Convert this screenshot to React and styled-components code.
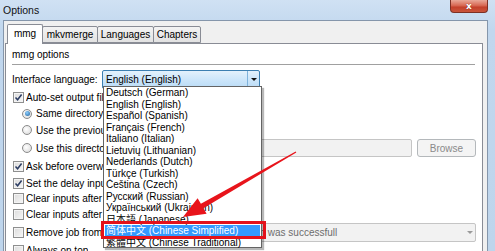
import React from "react";
import styled, { createGlobalStyle } from "styled-components";

const GlobalStyle = createGlobalStyle`
  html, body { margin: 0; padding: 0; background: #c6daef; }
  body { font-family: "Liberation Sans", Arial, sans-serif; }
  #root { width: 495px; height: 251px; }
`;

const Window = styled.div`
  position: relative;
  width: 495px;
  height: 251px;
  overflow: hidden;
  display: flex;
  flex-direction: column;
  background: linear-gradient(180deg, #d0e1f3 0px, #c1d7ee 30px, #bed5ec 251px);
`;

const TitleBar = styled.div`
  height: 20px;
  flex: none;
  display: flex;
  align-items: flex-start;
  padding-left: 3px;
`;

const Title = styled.span`
  font-size: 10.5px;
  line-height: 20px;
  color: #111;
`;

const CloseButton = styled.div`
  margin-left: auto;
  margin-right: 7px;
  width: 38px;
  height: 13px;
  box-sizing: border-box;
  border: 1px solid #7d3024;
  border-top: none;
  border-radius: 0 0 4px 4px;
  background: linear-gradient(180deg, #e9a898 0%, #d86a55 45%, #c4412b 60%, #c9553c 100%);
  display: flex;
  align-items: center;
  justify-content: center;
  color: #fff;
  font-family: "DejaVu Sans", sans-serif;
  font-weight: bold;
  font-size: 9px;
  line-height: 1;
  text-shadow: 0 0 1px #6a1a10;
`;

const Client = styled.div`
  flex: 1;
  min-height: 0;
  margin: 0 7px 0 3px;
  background: #f0f0f0;
  border: 1px solid #8596ab;
  border-bottom: none;
  padding: 3px 4px 0 1px;
  display: flex;
  flex-direction: column;
`;

const TabStrip = styled.div`
  height: 19px;
  flex: none;
  display: flex;
  align-items: flex-end;
  padding-left: 2px;
  position: relative;
  z-index: 1;
`;

const Tab = styled.div`
  box-sizing: border-box;
  width: ${(p) => p.$w}px;
  height: ${(p) => (p.$active ? 20 : 17)}px;
  margin-bottom: ${(p) => (p.$active ? -1 : 0)}px;
  margin-left: ${(p) => (p.$active ? 0 : -1)}px;
  border: 1px solid #898c95;
  border-bottom: ${(p) => (p.$active ? "none" : "1px solid #898c95")};
  border-radius: 2px 2px 0 0;
  background: ${(p) => (p.$active ? "#ffffff" : "linear-gradient(180deg, #f3f3f3, #e2e2e2)")};
  font-size: 10px;
  color: #000;
  display: flex;
  align-items: center;
  justify-content: center;
  padding-bottom: ${(p) => (p.$active ? 2 : 0)}px;
  &:first-child { margin-left: 0; }
`;

const Page = styled.div`
  flex: 1;
  background: #ffffff;
  border: 1px solid #898c95;
  border-bottom: none;
  padding: 0 6px;
  display: flex;
  flex-direction: column;
`;

const Header = styled.div`
  height: 20px;
  flex: none;
  display: flex;
  align-items: center;
  font-size: 10px;
  color: #000;
`;

const Separator = styled.div`
  height: 1px;
  flex: none;
  background: #a0a0a0;
  margin-right: 1px;
`;

const Row = styled.div`
  height: ${(p) => p.$h}px;
  margin-top: ${(p) => p.$mt || 0}px;
  flex: none;
  display: flex;
  align-items: center;
  padding-left: ${(p) => p.$indent || 0}px;
  font-size: 10px;
  color: #000;
  white-space: nowrap;
`;

const Label = styled.span`
  width: ${(p) => (p.$w ? `${p.$w}px` : "auto")};
  flex: ${(p) => (p.$grow ? 1 : "none")};
  margin-left: ${(p) => p.$gap || 0}px;
  overflow: hidden;
`;

const Box = styled.span`
  box-sizing: border-box;
  width: 11px;
  height: 11px;
  flex: none;
  border: 1px solid #8e8f8f;
  background: linear-gradient(135deg, #dcdcdc, #f6f6f6);
  box-shadow: inset 0 0 0 1px #f4f4f4;
  display: flex;
  align-items: center;
  justify-content: center;
`;

const RadioCircle = styled.span`
  box-sizing: border-box;
  width: 10px;
  height: 10px;
  flex: none;
  border-radius: 50%;
  border: 1px solid #8b8b8b;
  background: radial-gradient(circle at 40% 40%, #ffffff, #d6d6d6);
  display: flex;
  align-items: center;
  justify-content: center;
`;

const RadioDot = styled.span`
  width: 5px;
  height: 5px;
  border-radius: 50%;
  background: radial-gradient(circle at 40% 35%, #8ed0ff, #1d5f9b);
`;

const TextField = styled.div`
  box-sizing: border-box;
  width: 250px;
  height: 18px;
  flex: none;
  border: 1px solid #c5c5c5;
  border-radius: 2px;
  background: #f2f2f2;
`;

const Button = styled.div`
  box-sizing: border-box;
  width: 59px;
  height: 18px;
  margin-left: 5px;
  flex: none;
  border: 1px solid #b4b8bb;
  border-radius: 3px;
  background: #f4f4f4;
  color: #8a8a8a;
  font-size: 10px;
  display: flex;
  align-items: center;
  justify-content: center;
`;

const Combo = styled.div`
  box-sizing: border-box;
  width: ${(p) => p.$w}px;
  height: 19px;
  flex: none;
  display: flex;
  align-items: center;
  border: 1px solid ${(p) => (p.$focus ? "#3c7fb1" : "#c5c5c5")};
  border-radius: 2px;
  background: ${(p) =>
    p.$focus ? "linear-gradient(180deg, #e3f1fc 0%, #cde6fa 50%, #b9dbf6 100%)" : "#f2f2f2"};
  color: ${(p) => (p.$focus ? "#000" : "#6d6d6d")};
  padding-left: 3px;
  font-size: 10px;
  overflow: hidden;
  white-space: nowrap;
`;

const ComboText = styled.span`
  flex: 1;
  overflow: hidden;
`;

const ComboArrow = styled.span`
  width: 11px;
  height: 100%;
  flex: none;
  display: flex;
  align-items: center;
  justify-content: center;
  border-left: ${(p) => (p.$focus ? "1px solid #7fb3dc" : "none")};
  &::after {
    content: "";
    border-left: 3px solid transparent;
    border-right: 3px solid transparent;
    border-top: 3px solid ${(p) => (p.$focus ? "#111" : "#9a9a9a")};
  }
`;

const RightCombo = styled(Combo)`
  margin-left: auto;
`;

const DropList = styled.div`
  position: absolute;
  left: 103px;
  top: 86px;
  width: 159px;
  box-sizing: border-box;
  height: 162px;
  background: #ffffff;
  border: 1px solid #646464;
  box-shadow: 2px 2px 1px rgba(0, 0, 0, 0.28);
  z-index: 5;
  font-family: "Liberation Sans", "Noto Sans CJK SC", Arial, sans-serif;
`;

const Item = styled.div`
  height: 11.5px;
  line-height: 11.5px;
  padding-left: 1px;
  margin: 0 1px;
  font-size: 10px;
  white-space: nowrap;
  overflow: hidden;
  color: ${(p) => (p.$sel ? "#ffffff" : "#000")};
  background: ${(p) => (p.$sel ? "#3399ff" : "transparent")};
`;

const RedBox = styled.div`
  position: absolute;
  left: 101px;
  top: 221px;
  width: 165px;
  height: 18px;
  box-sizing: border-box;
  border: 3px solid #e3121b;
  z-index: 6;
`;

const Overlay = styled.svg`
  position: absolute;
  left: 0;
  top: 0;
  width: 495px;
  height: 251px;
  z-index: 7;
  pointer-events: none;
`;

function Check({ on }) {
  return (
    <Box>
      {on && (
        <svg width="9" height="9" viewBox="0 0 9 9">
          <path d="M1.5 4.5 L3.6 6.8 L7.6 1.5" fill="none" stroke="#2b3c63" strokeWidth="1.5" />
        </svg>
      )}
    </Box>
  );
}

function Radio({ on }) {
  return <RadioCircle>{on && <RadioDot />}</RadioCircle>;
}

const languages = [
  "Deutsch (German)",
  "English (English)",
  "Español (Spanish)",
  "Français (French)",
  "Italiano (Italian)",
  "Lietuvių (Lithuanian)",
  "Nederlands (Dutch)",
  "Türkçe (Turkish)",
  "Čeština (Czech)",
  "Русский (Russian)",
  "Український (Ukrainian)",
  "日本語 (Japanese)",
  "简体中文 (Chinese Simplified)",
  "繁體中文 (Chinese Traditional)",
];

export default function App() {
  return (
    <>
      <GlobalStyle />
      <Window>
        <TitleBar>
          <Title>Options</Title>
          <CloseButton>x</CloseButton>
        </TitleBar>
        <Client>
          <TabStrip>
            <Tab $active $w={36}>mmg</Tab>
            <Tab $w={56}>mkvmerge</Tab>
            <Tab $w={57}>Languages</Tab>
            <Tab $w={48}>Chapters</Tab>
          </TabStrip>
          <Page>
            <Header>mmg options</Header>
            <Separator />
            <Row $h={19} $mt={5}>
              <Label $w={90}>Interface language:</Label>
              <Combo $focus $w={158}>
                <ComboText>English (English)</ComboText>
                <ComboArrow $focus />
              </Combo>
            </Row>
            <Row $h={16} $indent={1}>
              <Check on />
              <Label $gap={2}>Auto-set output filename</Label>
            </Row>
            <Row $h={17} $indent={10}>
              <Radio on />
              <Label $gap={4}>Same directory as the first input file</Label>
            </Row>
            <Row $h={16} $indent={10}>
              <Radio />
              <Label $gap={4}>Use the previous output directory</Label>
            </Row>
            <Row $h={20} $indent={10}>
              <Radio />
              <Label $gap={4} $grow>Use this directory:</Label>
              <TextField />
              <Button>Browse</Button>
            </Row>
            <Row $h={17} $indent={1}>
              <Check on />
              <Label $gap={2}>Ask before overwriting things</Label>
            </Row>
            <Row $h={16} $indent={1}>
              <Check on />
              <Label $gap={2}>Set the delay input field from the file name</Label>
            </Row>
            <Row $h={15} $indent={1}>
              <Check />
              <Label $gap={2}>Clear inputs after a successful muxing run</Label>
            </Row>
            <Row $h={16} $indent={1}>
              <Check />
              <Label $gap={2}>Clear inputs after adding a job</Label>
            </Row>
            <Row $h={21} $indent={1}>
              <Check />
              <Label $gap={2} $grow>Remove job from the queue</Label>
              <RightCombo $w={275}>
                <ComboText>only if the run was successfull</ComboText>
                <ComboArrow />
              </RightCombo>
            </Row>
            <Row $h={14} $indent={1}>
              <Check />
              <Label $gap={2}>Always on top</Label>
            </Row>
          </Page>
        </Client>

        <DropList>
          {languages.map((l, i) => (
            <Item key={l} $sel={i === 12}>
              {l}
            </Item>
          ))}
        </DropList>
        <RedBox />
        <Overlay viewBox="0 0 495 251">
          <polygon
            points="295.7,151.6 200.9,203.8 197.6,198.2 183,217 206.6,213.8 203.4,208.2 296.3,152.4"
            fill="#e8141b"
          />
        </Overlay>
      </Window>
    </>
  );
}
